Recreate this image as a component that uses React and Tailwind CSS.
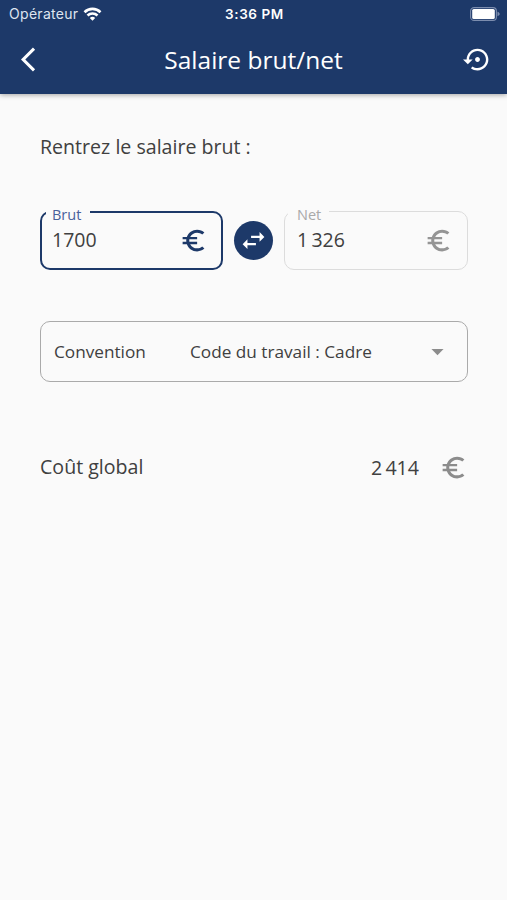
import React, { useState } from "react";

const Icon = ({ path, className }) => (
  <svg viewBox="0 0 24 24" fill="currentColor" className={className}>
    <path d={path} />
  </svg>
);

const icons = {
  back: "M11.67 3.87L9.9 2.1 0 12l9.9 9.9 1.77-1.77L3.54 12z",
  restore:
    "M14 12c0-1.1-.9-2-2-2s-2 .9-2 2 .9 2 2 2 2-.9 2-2zm-2-9c-4.97 0-9 4.03-9 9H0l4 4 4-4H5c0-3.87 3.13-7 7-7s7 3.13 7 7-3.13 7-7 7c-1.51 0-2.91-.49-4.06-1.3l-1.42 1.44C8.04 20.3 9.94 21 12 21c4.97 0 9-4.03 9-9s-4.03-9-9-9z",
  euro: "M15 18.5c-2.51 0-4.68-1.42-5.76-3.5H15v-2H8.58c-.05-.33-.08-.66-.08-1s.03-.67.08-1H15V9H9.24C10.32 6.92 12.5 5.5 15 5.5c1.61 0 3.09.59 4.23 1.57L21 5.3C19.41 3.87 17.3 3 15 3c-3.92 0-7.24 2.51-8.48 6H3v2h3.06c-.04.33-.06.66-.06 1s.02.67.06 1H3v2h3.52c1.24 3.49 4.56 6 8.48 6 2.31 0 4.41-.87 6-2.3l-1.78-1.77c-1.13.98-2.6 1.57-4.22 1.57z",
  swap: "M6.99 11L3 15l3.99 4v-3H14v-2H6.99v-3zM21 9l-3.99-4v3H10v2h7.01v3L21 9z",
  dropdown: "M7 10l5 5 5-5z",
};

const StatusBar = () => (
  <div className="grid h-[27px] grid-cols-3 items-center pl-[9px] pr-[7px] font-['Inter',sans-serif] text-white">
    <div className="flex items-center gap-[5px]">
      <span className="text-[14px] leading-5 tracking-[0.3px] text-[#dfe5f0]">Opérateur</span>
      <svg viewBox="0 0 18 14" className="h-[14px] w-[19px]" fill="none" stroke="currentColor" strokeWidth="2.6">
        <path d="M1 5.2a11.4 11.4 0 0 1 16 0" />
        <path d="M4 8.5a7.2 7.2 0 0 1 10 0" />
        <path d="M9 13.8L6.3 11a3.9 3.9 0 0 1 5.4 0z" fill="currentColor" stroke="none" />
      </svg>
    </div>
    <span className="text-center text-[13.5px] font-semibold leading-5 tracking-[0.6px]">3:36 PM</span>
    <svg viewBox="0 0 30 14" className="h-[14px] w-[30px] justify-self-end">
      <rect x="0.6" y="0.6" width="25.8" height="12.8" rx="3.5" fill="none" stroke="#7c8dae" strokeWidth="1.1" />
      <rect x="2.2" y="2" width="22.6" height="10" rx="1.6" fill="#fff" />
      <path d="M27.5 4.8v4.4c1.2-.4 2.2-1.2 2.2-2.2s-1-1.8-2.2-2.2z" fill="#7c8dae" />
    </svg>
  </div>
);

const Header = ({ onReset }) => (
  <header className="h-[94px] bg-[#1d3969] text-white shadow-[0_1px_5px_rgba(0,0,0,0.35)]">
    <StatusBar />
    <div className="flex h-[65px] items-center justify-between pl-[21px] pr-[15px]">
      <button type="button" aria-label="Retour" className="w-[23px]">
        <Icon path={icons.back} className="size-[29px]" />
      </button>
      <h1 className="text-[24.5px] leading-8">Salaire brut/net</h1>
      <button type="button" aria-label="Réinitialiser" onClick={onReset}>
        <Icon path={icons.restore} className="size-[29px]" />
      </button>
    </div>
  </header>
);

const AmountField = ({ label, value, active }) => (
  <fieldset
    className={
      active
        ? "h-[70px] w-[183px] rounded-[10px] border-2 border-[#1d3969] text-[#1d3969]"
        : "h-[70px] w-[184px] rounded-[10px] border border-[#dcdcdc] text-[#959595]"
    }
  >
    <legend
      className={
        active
          ? "ml-[4px] h-[23px] w-[44px] pl-[6px] pt-[5px] text-[14.5px] leading-[20px] text-[#48609a]"
          : "ml-[3px] h-[22px] w-[41px] pl-[9px] pt-[5px] text-[14.5px] leading-[20px] text-[#a9a9a9]"
      }
    >
      {label}
    </legend>
    <div
      className={
        active
          ? "flex h-[35px] items-center justify-between pl-[10px] pr-[13px]"
          : "flex h-[36px] items-center justify-between pl-[12px] pr-[14px]"
      }
    >
      <span className="pb-px text-[19.5px] leading-6 text-[#404040]">{value}</span>
      <Icon path={icons.euro} className="size-[29px]" />
    </div>
  </fieldset>
);

const App = () => {
  const [grossFirst, setGrossFirst] = useState(true);

  return (
    <div className="min-h-screen bg-[#fafafa] font-['Open_Sans',sans-serif] text-[#404040]">
      <Header onReset={() => setGrossFirst(true)} />

      <main className="pl-[40px] pr-[39px] pt-[38px]">
        <p className="text-[19.6px] leading-[30px]">Rentrez le salaire brut :</p>

        {/* Gross / net amounts */}
        <div className="mt-[38px] flex items-end">
          <AmountField label="Brut" value="1700" active={grossFirst} />
          <button
            type="button"
            aria-label="Inverser"
            onClick={() => setGrossFirst(!grossFirst)}
            className="mb-[10px] ml-[11px] mr-[11px] flex size-[39px] items-center justify-center rounded-full bg-[#1d3969] text-white"
          >
            <Icon path={icons.swap} className="size-[29px]" />
          </button>
          <AmountField label="Net" value={"1\u2009326"} active={!grossFirst} />
        </div>

        <div className="mt-[51px] flex h-[61px] items-center rounded-[10px] border border-[#aaaaaa] pl-[13px] pr-[15px] text-[17.2px]">
          <span className="w-[136px]">Convention</span>
          <span className="flex-1">Code du travail : Cadre</span>
          <Icon path={icons.dropdown} className="size-[29px] text-[#8c8c8c]" />
        </div>

        <div className="mt-[70px] flex h-[31px] items-center text-[19.6px]">
          <span className="flex-1 pb-[2px]">Coût global</span>
          <span className="mr-[20px]">{"2\u2009414"}</span>
          <Icon path={icons.euro} className="size-[29px] text-[#8c8c8c]" />
        </div>
      </main>
    </div>
  );
};

export default App;
